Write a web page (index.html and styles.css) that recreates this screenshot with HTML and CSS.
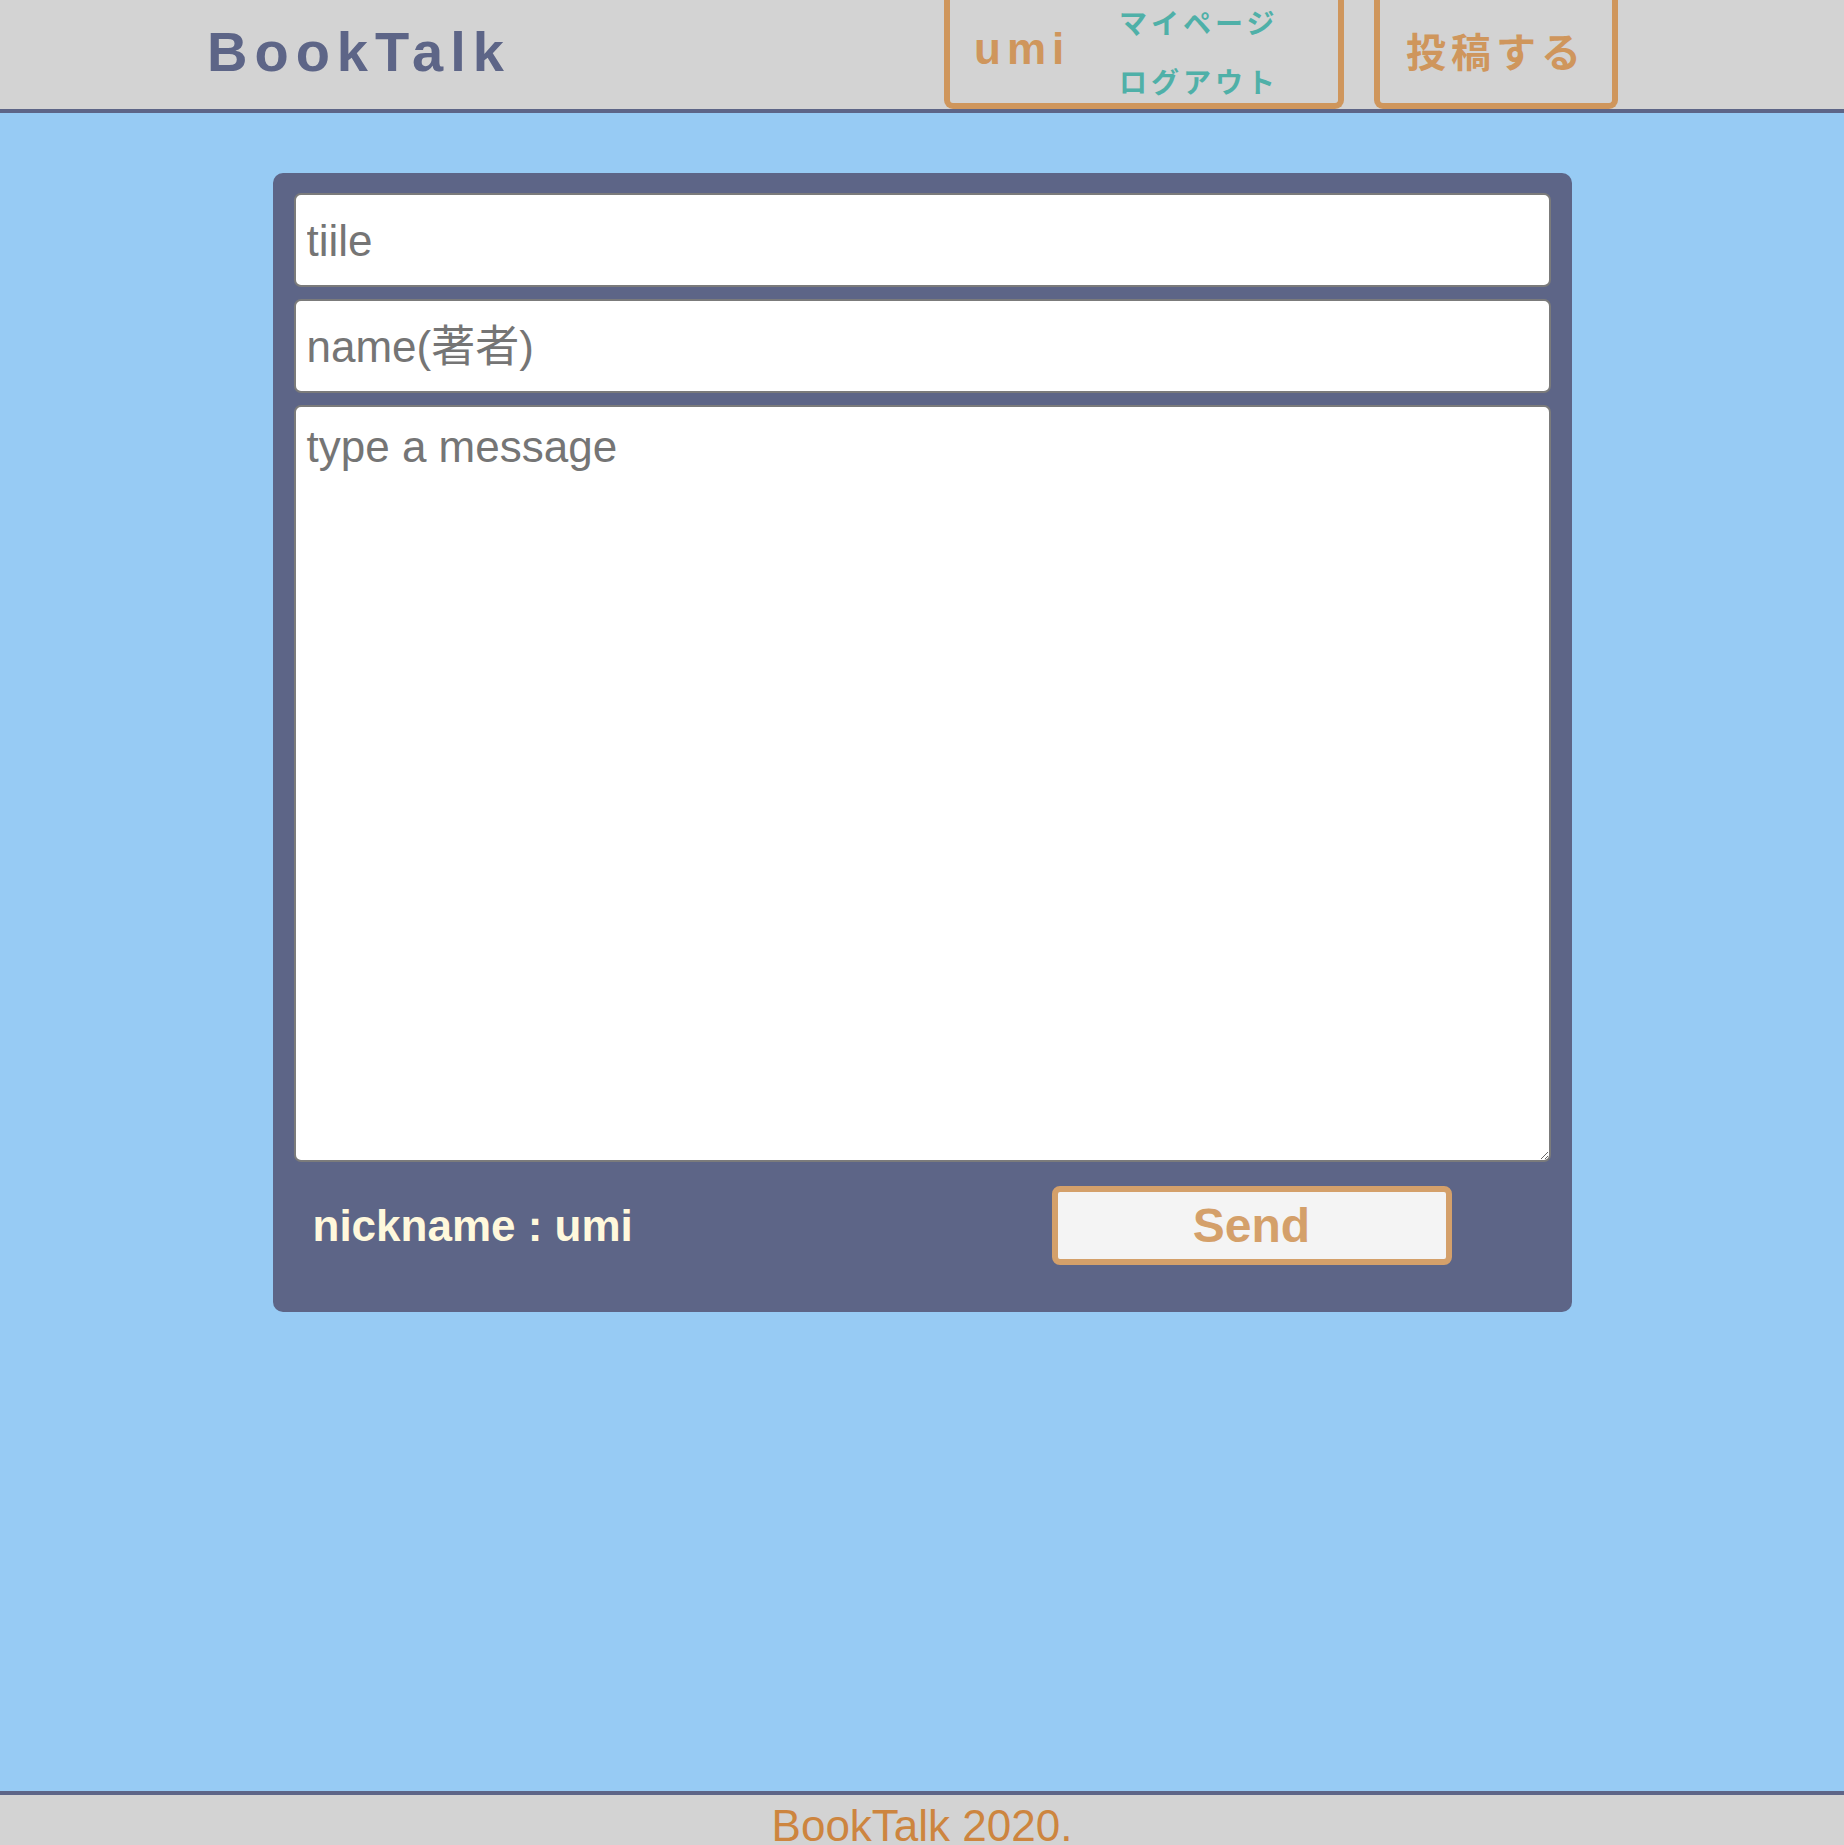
FILE: index.html
```html
<!DOCTYPE html>
<html lang="ja">
<head>
<meta charset="utf-8">
<title>BookTalk</title>
<link rel="stylesheet" href="styles.css">
</head>
<body>
<div class="page">
  <header class="site-header">
    <a class="logo" href="#">BookTalk</a>
    <nav class="nav">
      <div class="user-box">
        <span class="user-name">umi</span>
        <div class="user-links">
          <a href="#" class="user-link">マイページ</a>
          <a href="#" class="user-link">ログアウト</a>
        </div>
      </div>
      <a href="#" class="post-box">投稿する</a>
    </nav>
  </header>
  <main class="main">
    <form class="post-form">
      <input class="field" type="text" placeholder="tiile">
      <input class="field" type="text" placeholder="name(著者)">
      <textarea class="field message" placeholder="type a message"></textarea>
      <div class="form-bottom">
        <p class="nickname">nickname : umi</p>
        <button type="button" class="send">Send</button>
      </div>
    </form>
  </main>
  <footer class="site-footer">BookTalk 2020.</footer>
</div>
</body>
</html>
```
FILE: styles.css
```css
* { box-sizing: border-box; }
html, body { margin: 0; padding: 0; }
body {
  background: #97cbf4;
  font-family: "Liberation Sans", "Noto Sans CJK JP", sans-serif;
  overflow: hidden;
}
.page {
  min-height: 100vh;
  display: flex;
  flex-direction: column;
}
.site-header {
  background: #d3d3d3;
  height: 113px;
  border-bottom: 4px solid #5d6587;
  display: flex;
  justify-content: space-between;
  padding: 0 226px 0 207px;
}
.logo {
  align-self: center;
  color: #5d6587;
  text-decoration: none;
  font-weight: bold;
  font-size: 56px;
  letter-spacing: 7px;
  margin-top: -6px;
}
.nav {
  display: flex;
  gap: 30px;
  height: 109px;
}
.user-box, .post-box {
  height: 109px;
  border: 6px solid #cf965c;
  border-top: none;
  border-radius: 0 0 9px 9px;
}
.user-box {
  width: 400px;
  display: flex;
  align-items: center;
  padding: 0 0 6px 24px;
}
.user-name {
  color: #cf965c;
  font-weight: bold;
  font-size: 44px;
  letter-spacing: 6px;
  width: 145px;
}
.user-links {
  display: flex;
  flex-direction: column;
  justify-content: space-between;
  height: 103px;
  margin-top: 6px;
}
.user-link {
  color: #4fb0a8;
  text-decoration: none;
  font-family: "Noto Sans CJK JP", sans-serif;
  font-weight: bold;
  font-size: 28px;
  letter-spacing: 4px;
  line-height: 44px;
}
.post-box {
  width: 244px;
  display: flex;
  align-items: center;
  padding: 0 0 4px 26px;
  color: #cf965c;
  text-decoration: none;
  font-family: "Noto Sans CJK JP", sans-serif;
  font-weight: bold;
  font-size: 40px;
  letter-spacing: 5px;
}
.main {
  flex: 1;
  padding-top: 60px;
}
.post-form {
  width: 1299px;
  margin: 0 auto;
  background: #5d6587;
  border-radius: 10px;
  padding: 20px 21px 47px;
  display: flex;
  flex-direction: column;
}
.field {
  display: block;
  width: 100%;
  border: 2px solid #7b7b7b;
  border-radius: 7px;
  background: #fff;
  font-family: "Liberation Sans", "Noto Sans CJK JP", sans-serif;
  font-size: 44px;
  color: #333;
  padding: 2px 11px 0;
  height: 94px;
  margin: 0;
}
.field + .field { margin-top: 12px; }
.field::placeholder { color: #757575; }
.message {
  height: 757px;
  padding: 15px 11px 8px;
  resize: vertical;
}
.form-bottom {
  margin-top: 24px;
  display: flex;
  align-items: center;
  justify-content: space-between;
  padding: 0 99px 0 19px;
}
.nickname {
  margin: 0;
  color: #fff8dc;
  font-weight: bold;
  font-size: 44px;
}
.send {
  width: 400px;
  height: 79px;
  border: 6px solid #d4a06a;
  border-radius: 8px;
  background: #f4f4f4;
  color: #d4a06a;
  font-family: "Liberation Sans", sans-serif;
  font-weight: bold;
  font-size: 48px;
  padding: 0;
}
.site-footer {
  height: 54px;
  overflow: hidden;
  border-top: 4px solid #5d6587;
  background: #d3d3d3;
  color: #cd853f;
  text-align: center;
  font-size: 44px;
  line-height: 44px;
  padding-top: 9px;
}
```
